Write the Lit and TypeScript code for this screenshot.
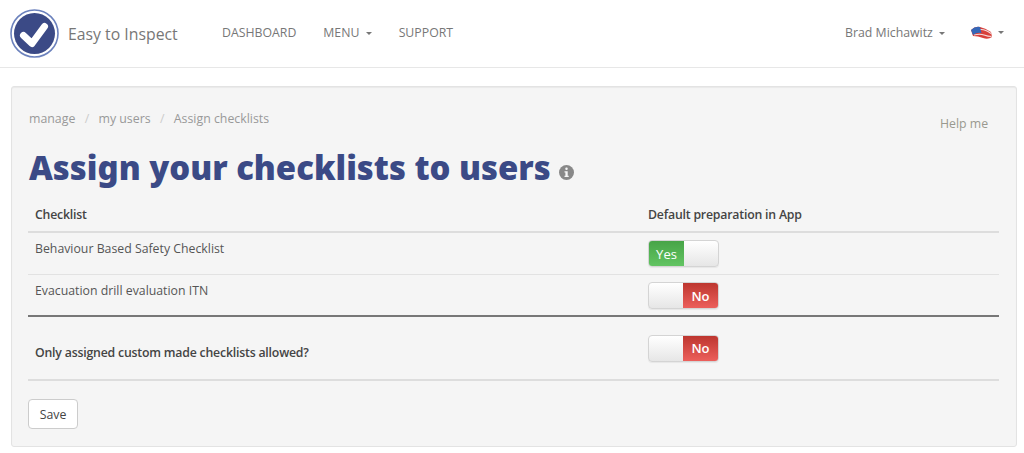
import { LitElement, html, css } from "lit";
import { customElement } from "lit/decorators.js";

@customElement("app-root")
export class AppRoot extends LitElement {
  static styles = css`
    :host { display: block; height: 453px; overflow: hidden; background: #fff; font-family: "Open Sans", sans-serif; font-size: 12.3px; color: #555; }
    * { box-sizing: border-box; }
    .nav { height: 68px; border-bottom: 1px solid #e7e7e7; display: flex; align-items: center; padding-left: 10px; padding-right: 20px; }
    .logo { width: 49px; height: 49px; display: block; }
    .brand { font-size: 15.8px; color: #777; margin-left: 9px; width: 154px; margin-top: 1px; }
    .links { display: flex; gap: 27px; flex: 1; color: #777; font-size: 12.3px; margin-top: -2px; }
    .right { display: flex; align-items: center; color: #777; font-size: 12.3px; margin-top: -2px; }
    .caret { display: inline-block; width: 0; height: 0; border-left: 3.5px solid transparent; border-right: 3.5px solid transparent; border-top: 3.5px solid #777; margin-left: 3px; vertical-align: middle; }
    .flag { width: 21px; height: 14px; margin-left: 26px; margin-right: 3px; display: block; }
    .panel { margin: 18px 7px 0 11px; height: 361px; background: #f5f5f5; border: 1px solid #e3e3e3; border-radius: 3px; padding: 0 17px 0 16px; box-shadow: inset 0 1px 1px rgba(0,0,0,.05); }
    .crumbrow { display: flex; justify-content: space-between; padding-top: 23px; height: 54px; color: #999; }
    .crumb { padding-left: 1px; font-size: 12.35px; }
    .crumb span { color: #ccc; margin: 0 9.3px; }
    .help { margin-top: 5px; margin-right: -2px; width: 61px; color: #99998f; }
    h1 { margin: 0 0 0 1px; height: 53px; font-family: "Noto Sans", sans-serif; font-weight: 900; font-size: 32.87px; line-height: 50px; color: #3b4a86; display: flex; align-items: center; }
    .info { width: 15px; height: 15px; margin-left: 8px; margin-top: 10px; display: block; }
    .row { display: flex; border-bottom: 1px solid #e2e2e2; padding-left: 7px; color: #555; }
    .row .c1 { width: 613px; }
    .head { height: 39px; padding-top: 4px; border-bottom: 2px solid #ddd; color: #444; align-items: center; }
    .r1 { height: 42px; padding-top: 7px; }
    .r2 { height: 42px; border-bottom: 2px solid #777; padding-top: 7px; }
    .r3 { height: 64px; border-bottom: 2px solid #ddd; color: #444; align-items: center; }
    .head .c1, .head .c2, .r3 .c1 { font-weight: 600; letter-spacing: -0.2px; }
    .r3 .c1 { margin-top: 8px; }
    .sw { width: 71px; height: 27px; display: flex; border-radius: 4px; border: 1px solid #d4d4d4; overflow: hidden; background: linear-gradient(#fff, #e6e6e6); font-size: 13px; color: #fff; box-shadow: 0 1px 1px rgba(0,0,0,.06); }
    .sw b { width: 35px; display: flex; align-items: center; justify-content: center; font-weight: 400; }
    .sw i { flex: 1; }
    .yes { background: linear-gradient(#47a447, #62c462); }
    .no { background: linear-gradient(#bd362f, #ec5f5b); font-weight: 600 !important; }
    .save { display: block; margin-top: 18px; width: 50px; height: 30px; background: #fff; border: 1px solid #ccc; border-radius: 4px; font: 12.3px "Open Sans", sans-serif; color: #444; padding: 0; }
  `;

  render() {
    return html`
      <div class="nav">
        <svg class="logo" viewBox="0 0 49 49">
          <circle cx="24.5" cy="24.5" r="23.5" fill="#fff" stroke="#6c82bd" stroke-width="1.6"/>
          <circle cx="24.5" cy="24.5" r="20.5" fill="#3b4a86"/>
          <path d="M13.5 26.5 L22 34.5 L34.5 17.5" fill="none" stroke="#fff" stroke-width="7" stroke-linejoin="round" stroke-linecap="round"/>
        </svg>
        <div class="brand">Easy to Inspect</div>
        <div class="links">
          <span>DASHBOARD</span>
          <span>MENU <i class="caret"></i></span>
          <span>SUPPORT</span>
        </div>
        <div class="right">
          <span>Brad Michawitz <i class="caret"></i></span>
          <svg class="flag" viewBox="0 0 21 14">
            <path d="M0 4 Q4 0 9 1 T20 6 L21 11 Q17 14 12 12 T2 10 Z" fill="#d8403a"/>
            <path d="M9 3.5 Q14 3 20 7.5 M3 9 Q9 7.5 13 9 T20.5 10.5" stroke="#f3dcdc" fill="none" stroke-width="1.1"/>
            <path d="M0 4 Q4 0 9 1 L10.5 7 Q6 6 2 9 Z" fill="#3567b8"/>
          </svg>
          <i class="caret"></i>
        </div>
      </div>
      <div class="panel">
        <div class="crumbrow">
          <div class="crumb">manage<span>/</span>my users<span>/</span>Assign checklists</div>
          <div class="help">Help me</div>
        </div>
        <h1>Assign your checklists to users
          <svg class="info" viewBox="0 0 15 15">
            <circle cx="7.5" cy="7.5" r="7.5" fill="#888"/>
            <rect x="6.3" y="2.5" width="2.4" height="2.4" rx="1" fill="#f5f5f5"/>
            <path d="M5.5 6.2 H8.7 V10.8 H9.7 V12 H5.5 V10.8 H6.4 V7.4 H5.5 Z" fill="#f5f5f5"/>
          </svg>
        </h1>
        <div class="row head"><div class="c1">Checklist</div><div class="c2">Default preparation in App</div></div>
        <div class="row r1"><div class="c1">Behaviour Based Safety Checklist</div><div class="sw"><b class="yes">Yes</b><i></i></div></div>
        <div class="row r2"><div class="c1">Evacuation drill evaluation ITN</div><div class="sw"><i></i><b class="no">No</b></div></div>
        <div class="row r3"><div class="c1">Only assigned custom made checklists allowed?</div><div class="sw"><i></i><b class="no">No</b></div></div>
        <button class="save">Save</button>
      </div>
    `;
  }
}
